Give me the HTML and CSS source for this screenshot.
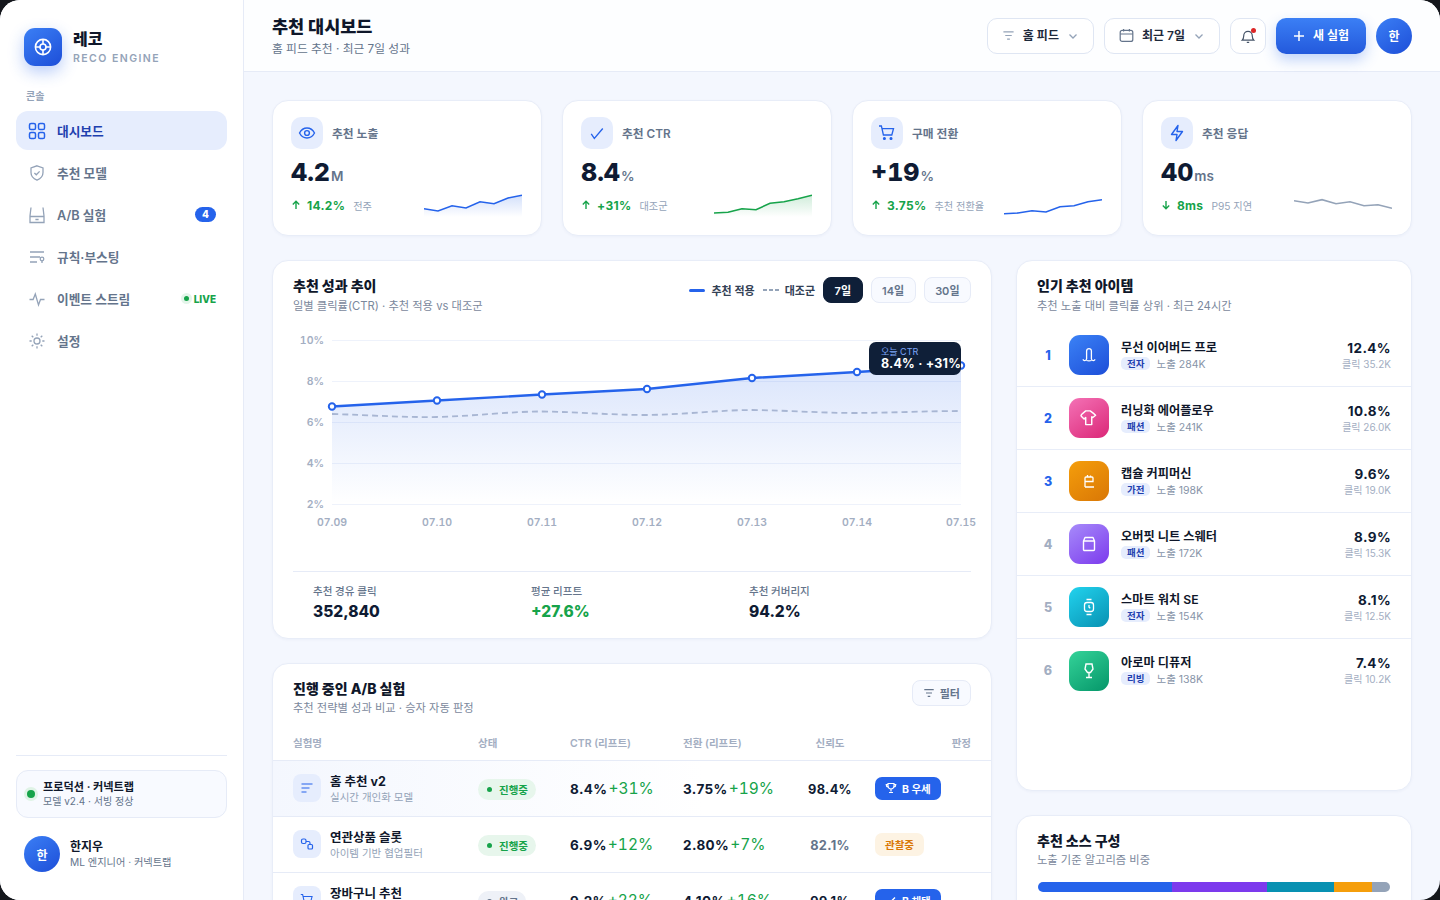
FILE: index.html
```html
<!DOCTYPE html>
<html lang="ko">
<head>
    <meta charset="UTF-8">
    <meta name="viewport" content="width=device-width, initial-scale=1.0">
    <title>레코 추천 대시보드</title>
    <link rel="stylesheet" href="styles.css">
</head>
<body>
<div class="app">

    <!-- Sidebar -->
    <aside class="sidebar">
        <div class="brand">
            <div class="brand-logo">
                <svg width="20" height="20" viewBox="0 0 20 20" fill="none" stroke="#fff" stroke-width="1.6"><circle cx="10" cy="10" r="7.6"/><circle cx="10" cy="10" r="3"/><path d="M10 2.4v4.6M10 13v4.6M2.4 10H7M13 10h4.6"/></svg>
            </div>
            <div>
                <div class="brand-name">레코</div>
                <div class="brand-sub">RECO ENGINE</div>
            </div>
        </div>
        <div class="nav-label">콘솔</div>
        <nav class="nav">
            <a class="nav-item active">
                <svg class="nav-ico" viewBox="0 0 18 18" fill="none" stroke="currentColor" stroke-width="1.5"><rect x="1.5" y="1.5" width="6" height="6" rx="1.6"/><rect x="10.5" y="1.5" width="6" height="6" rx="1.6"/><rect x="1.5" y="10.5" width="6" height="6" rx="1.6"/><rect x="10.5" y="10.5" width="6" height="6" rx="1.6"/></svg>
                <span>대시보드</span>
            </a>
            <a class="nav-item">
                <svg class="nav-ico" viewBox="0 0 18 18" fill="none" stroke="currentColor" stroke-width="1.3"><path d="M9 1.8l6 2.2v4.6c0 3.6-2.4 6.2-6 7.6-3.6-1.4-6-4-6-7.6V4z"/><path d="M6.4 9l1.9 1.8 3.3-3.4"/></svg>
                <span>추천 모델</span>
            </a>
            <a class="nav-item">
                <svg class="nav-ico" viewBox="0 0 18 18" fill="none" stroke="currentColor" stroke-width="1.3"><path d="M3 1.5L2 10v6.5h14V10L15 1.5M2 10.5h14M7.4 13.5h3.2"/></svg>
                <span>A/B 실험</span>
                <span class="nav-count">4</span>
            </a>
            <a class="nav-item">
                <svg class="nav-ico" viewBox="0 0 18 18" fill="none" stroke="currentColor" stroke-width="1.3"><path d="M2 4h14M2 9h10M2 14h7"/><circle cx="14" cy="11" r="1.8"/><path d="M14 12.8V15"/></svg>
                <span>규칙·부스팅</span>
            </a>
            <a class="nav-item">
                <svg class="nav-ico" viewBox="0 0 18 18" fill="none" stroke="currentColor" stroke-width="1.3"><path d="M1.5 9.5h3.6l2.2-5.5 3.2 11 2-5.5h4"/></svg>
                <span>이벤트 스트림</span>
                <span class="nav-live"><i class="live-dot"></i>LIVE</span>
            </a>
            <a class="nav-item">
                <svg class="nav-ico" viewBox="0 0 18 18" fill="none" stroke="currentColor" stroke-width="1.3"><circle cx="9" cy="9" r="3"/><path d="M9 1.5v2.2M9 14.3v2.2M1.5 9h2.2M14.3 9h2.2M3.7 3.7l1.6 1.6M12.7 12.7l1.6 1.6M3.7 14.3l1.6-1.6M12.7 5.3l1.6-1.6"/></svg>
                <span>설정</span>
            </a>
        </nav>
        <div class="side-bottom">
            <div class="env-card">
                <i class="env-dot"></i>
                <div>
                    <div class="env-title">프로덕션 · 커넥트랩</div>
                    <div class="env-sub">모델 v2.4 · 서빙 정상</div>
                </div>
            </div>
            <div class="user-row">
                <div class="avatar">한</div>
                <div>
                    <div class="user-name">한지우</div>
                    <div class="user-role">ML 엔지니어 · 커넥트랩</div>
                </div>
            </div>
        </div>
    </aside>

    <main class="main">
        <!-- Top bar -->
        <header class="topbar">
            <div class="top-titles">
                <h1>추천 대시보드</h1>
                <p>홈 피드 추천 · 최근 7일 성과</p>
            </div>
            <div class="top-actions">
                <button class="select">
                    <svg width="13" height="13" viewBox="0 0 14 14" fill="none" stroke="#94a3b8" stroke-width="1.3"><path d="M1.5 3h11M3.5 7h7M5.5 11h3"/></svg>
                    <span>홈 피드</span>
                    <svg class="chev" width="12" height="12" viewBox="0 0 12 12" fill="none" stroke="#94a3b8" stroke-width="1.3"><path d="M2.5 4.5L6 8l3.5-3.5"/></svg>
                </button>
                <button class="select">
                    <svg width="15" height="15" viewBox="0 0 15 15" fill="none" stroke="#64748b" stroke-width="1.2"><rect x="1.2" y="2.4" width="12.6" height="11" rx="2"/><path d="M1.2 6h12.6M4.6 1v2.6M10.4 1v2.6"/></svg>
                    <span>최근 7일</span>
                    <svg class="chev" width="12" height="12" viewBox="0 0 12 12" fill="none" stroke="#94a3b8" stroke-width="1.3"><path d="M2.5 4.5L6 8l3.5-3.5"/></svg>
                </button>
                <button class="bell">
                    <svg width="16" height="16" viewBox="0 0 16 16" fill="none" stroke="#475569" stroke-width="1.2"><path d="M2.2 12.2c1-1 1.5-2 1.5-4.2 0-2.8 1.8-4.6 4.3-4.6s4.3 1.8 4.3 4.6c0 2.2.5 3.2 1.5 4.2zM6.8 14.4h2.4"/></svg>
                    <i class="bell-dot"></i>
                </button>
                <button class="primary">
                    <svg width="12" height="12" viewBox="0 0 12 12" fill="none" stroke="#fff" stroke-width="1.5"><path d="M6 1v10M1 6h10"/></svg>
                    <span>새 실험</span>
                </button>
                <div class="avatar">한</div>
            </div>
        </header>

        <div class="content">
            <!-- KPI cards -->
            <section class="kpis">
                <div class="card kpi">
                    <div class="kpi-head">
                        <span class="kpi-ico"><svg width="18" height="18" viewBox="0 0 18 18" fill="none" stroke="#2563eb" stroke-width="1.4"><path d="M1.5 9C3.2 5.8 5.8 4 9 4s5.8 1.8 7.5 5C14.8 12.2 12.2 14 9 14S3.2 12.2 1.5 9z"/><circle cx="9" cy="9" r="2.4"/></svg></span>
                        <span class="kpi-label">추천 노출</span>
                    </div>
                    <div class="kpi-value">4.2<small>M</small></div>
                    <div class="kpi-foot">
                        <div class="delta">
                            <svg width="10" height="10" viewBox="0 0 10 10" fill="none" stroke="#16a34a" stroke-width="1.4"><path d="M5 9V1.5M1.8 4.5L5 1.3l3.2 3.2"/></svg>
                            <b>14.2%</b><span>전주</span>
                        </div>
                        <svg class="spark" viewBox="0 0 98 24" fill="none">
                            <defs><linearGradient id="sparkBlue" x1="0" y1="0" x2="0" y2="1"><stop offset="0" stop-color="#2563eb" stop-opacity=".2"/><stop offset="1" stop-color="#2563eb" stop-opacity="0"/></linearGradient></defs>
                            <path d="M0 14.7L14 17 28 11.7 42 14 56 7.7 70 9.7 84 4 98 1.3V23H0z" fill="url(#sparkBlue)"/>
                            <path d="M0 14.7L14 17 28 11.7 42 14 56 7.7 70 9.7 84 4 98 1.3" stroke="#2563eb" stroke-width="1.6"/>
                        </svg>
                    </div>
                </div>
                <div class="card kpi">
                    <div class="kpi-head">
                        <span class="kpi-ico"><svg width="16" height="16" viewBox="0 0 18 18" fill="none" stroke="#2563eb" stroke-width="1.5"><path d="M2.5 10l3.5 5 9.5-11"/></svg></span>
                        <span class="kpi-label">추천 CTR</span>
                    </div>
                    <div class="kpi-value">8.4<small>%</small></div>
                    <div class="kpi-foot">
                        <div class="delta">
                            <svg width="10" height="10" viewBox="0 0 10 10" fill="none" stroke="#16a34a" stroke-width="1.4"><path d="M5 9V1.5M1.8 4.5L5 1.3l3.2 3.2"/></svg>
                            <b>+31%</b><span>대조군</span>
                        </div>
                        <svg class="spark" viewBox="0 0 98 24" fill="none">
                            <defs><linearGradient id="sparkGreen" x1="0" y1="0" x2="0" y2="1"><stop offset="0" stop-color="#16a34a" stop-opacity=".2"/><stop offset="1" stop-color="#16a34a" stop-opacity="0"/></linearGradient></defs>
                            <path d="M0 19L14 18.3 28 14.7 42 15.7 56 9.3 70 7.7 84 4.7 98 1.3V23H0z" fill="url(#sparkGreen)"/>
                            <path d="M0 19L14 18.3 28 14.7 42 15.7 56 9.3 70 7.7 84 4.7 98 1.3" stroke="#16a34a" stroke-width="1.6"/>
                        </svg>
                    </div>
                </div>
                <div class="card kpi">
                    <div class="kpi-head">
                        <span class="kpi-ico"><svg width="18" height="18" viewBox="0 0 18 18" fill="none" stroke="#2563eb" stroke-width="1.3"><path d="M1 2h2.4l2 9h8.4l1.700-6.400H4"/><circle cx="6.400" cy="14.500" r=".9" fill="#2563eb"/><circle cx="13" cy="14.500" r=".9" fill="#2563eb"/></svg></span>
                        <span class="kpi-label">구매 전환</span>
                    </div>
                    <div class="kpi-value">+19<small>%</small></div>
                    <div class="kpi-foot">
                        <div class="delta">
                            <svg width="10" height="10" viewBox="0 0 10 10" fill="none" stroke="#16a34a" stroke-width="1.4"><path d="M5 9V1.5M1.8 4.5L5 1.3l3.2 3.2"/></svg>
                            <b>3.75%</b><span>추천 전환율</span>
                        </div>
                        <svg class="spark" viewBox="0 0 98 24" fill="none">
                            <path d="M0 19.7L14 19 28 16.7 42 18 56 12.7 70 11.7 84 7.7 98 5.7" stroke="#2563eb" stroke-width="1.6"/>
                        </svg>
                    </div>
                </div>
                <div class="card kpi">
                    <div class="kpi-head">
                        <span class="kpi-ico"><svg width="18" height="18" viewBox="0 0 18 18" fill="none" stroke="#2563eb" stroke-width="1.4" stroke-linejoin="round"><path d="M10 1.5L3.5 10.500H9L8 16.500l6.500-9H9z"/></svg></span>
                        <span class="kpi-label">추천 응답</span>
                    </div>
                    <div class="kpi-value">40<small>ms</small></div>
                    <div class="kpi-foot">
                        <div class="delta">
                            <svg width="10" height="10" viewBox="0 0 10 10" fill="none" stroke="#16a34a" stroke-width="1.4"><path d="M5 1v7.5M1.8 5.500L5 8.700l3.200-3.200"/></svg>
                            <b>8ms</b><span>P95 지연</span>
                        </div>
                        <svg class="spark" viewBox="0 0 98 24" fill="none">
                            <path d="M0 6.7L14 9 28 5.7 42 9.7 56 7.7 70 11.7 84 10.7 98 14.3" stroke="#94a3b8" stroke-width="1.6"/>
                        </svg>
                    </div>
                </div>
            </section>

            <div class="columns">
                <div class="col">
                    <!-- Trend chart -->
                    <section class="card chart-card">
                        <div class="card-head">
                            <div>
                                <h2>추천 성과 추이</h2>
                                <p>일별 클릭률(CTR) · 추천 적용 vs 대조군</p>
                            </div>
                            <div class="chart-tools">
                                <span class="legend"><i class="leg-solid"></i>추천 적용</span>
                                <span class="legend"><i class="leg-dash"></i>대조군</span>
                                <button class="range on">7일</button>
                                <button class="range">14일</button>
                                <button class="range">30일</button>
                            </div>
                        </div>
                        <div class="plot">
                            <svg class="plot-svg" width="678" height="210" viewBox="293 326 678 210" fill="none">
                                <defs><linearGradient id="areaFill" x1="0" y1="0" x2="0" y2="1"><stop offset="0" stop-color="#2563eb" stop-opacity=".17"/><stop offset="1" stop-color="#2563eb" stop-opacity="0"/></linearGradient></defs>
                                <g stroke="#eef2fb" stroke-width="1">
                                    <path d="M332 340.5H961M332 381.5H961M332 422.5H961M332 463.5H961M332 504.5H961"/>
                                </g>
                                <g class="axis" text-anchor="end">
                                    <text x="324" y="344">10%</text>
                                    <text x="324" y="385">8%</text>
                                    <text x="324" y="426">6%</text>
                                    <text x="324" y="467">4%</text>
                                    <text x="324" y="508">2%</text>
                                </g>
                                <g class="axis" text-anchor="middle">
                                    <text x="332" y="526">07.09</text>
                                    <text x="437" y="526">07.10</text>
                                    <text x="542" y="526">07.11</text>
                                    <text x="647" y="526">07.12</text>
                                    <text x="752" y="526">07.13</text>
                                    <text x="857" y="526">07.14</text>
                                    <text x="961" y="526">07.15</text>
                                </g>
                                <path d="M332 406.5L437 400.5 542 394.5 647 389 752 378 857 372 961 365.5V504H332z" fill="url(#areaFill)"/>
                                <path d="M332 414C370 415 400 417.5 437 417 475 416 510 411.5 542 411.5 580 412 610 415 647 415 685 414.5 720 410 752 410 790 410.5 820 413 857 413 890 412.8 930 411 961 411" stroke="#a8b6d3" stroke-width="1.8" stroke-dasharray="6 4"/>
                                <path d="M332 406.5L437 400.5 542 394.5 647 389 752 378 857 372 961 365.5" stroke="#2563eb" stroke-width="2.4"/>
                                <g fill="#fff" stroke="#2563eb" stroke-width="2">
                                    <circle cx="332" cy="406.5" r="3.2"/>
                                    <circle cx="437" cy="400.5" r="3.2"/>
                                    <circle cx="542" cy="394.5" r="3.2"/>
                                    <circle cx="647" cy="389" r="3.2"/>
                                    <circle cx="752" cy="378" r="3.2"/>
                                    <circle cx="857" cy="372" r="3.2"/>
                                    <circle cx="961" cy="365.5" r="3.2"/>
                                </g>
                            </svg>
                            <div class="tip">
                                <div class="tip-label">오늘 CTR</div>
                                <div class="tip-value">8.4% · +31%</div>
                            </div>
                        </div>
                        <div class="summary">
                            <div>
                                <div class="sum-label">추천 경유 클릭</div>
                                <div class="sum-value">352,840</div>
                            </div>
                            <div>
                                <div class="sum-label">평균 리프트</div>
                                <div class="sum-value up">+27.6%</div>
                            </div>
                            <div>
                                <div class="sum-label">추천 커버리지</div>
                                <div class="sum-value">94.2%</div>
                            </div>
                        </div>
                    </section>

                    <!-- A/B experiments -->
                    <section class="card ab-card">
                        <div class="card-head ab-head">
                            <div>
                                <h2>진행 중인 A/B 실험</h2>
                                <p>추천 전략별 성과 비교 · 승자 자동 판정</p>
                            </div>
                            <button class="filter">
                                <svg width="12" height="12" viewBox="0 0 14 14" fill="none" stroke="#64748b" stroke-width="1.3"><path d="M1.5 3h11M3.5 7h7M5.5 11h3"/></svg>
                                필터
                            </button>
                        </div>
                        <table class="ab-table">
                            <thead>
                                <tr>
                                    <th class="c-name">실험명</th>
                                    <th class="c-status">상태</th>
                                    <th class="c-ctr">CTR (리프트)</th>
                                    <th class="c-conv">전환 (리프트)</th>
                                    <th class="c-conf">신뢰도</th>
                                    <th class="c-verdict">판정</th>
                                </tr>
                            </thead>
                            <tbody>
                                <tr class="hl">
                                    <td class="c-name">
                                        <div class="exp">
                                            <span class="exp-ico"><svg width="14" height="14" viewBox="0 0 14 14" fill="none" stroke="#2563eb" stroke-width="1.1"><path d="M1.5 3h11M1.5 7h8M1.5 11h5"/></svg></span>
                                            <div class="exp-text"><div class="exp-name">홈 추천 v2</div><div class="exp-sub">실시간 개인화 모델</div></div>
                                        </div>
                                    </td>
                                    <td><span class="pill run"><i></i>진행중</span></td>
                                    <td><b class="num">8.4%</b><span class="lift">+31%</span></td>
                                    <td><b class="num">3.75%</b><span class="lift">+19%</span></td>
                                    <td class="c-conf"><b class="num conf">98.4%</b></td>
                                    <td class="c-verdict-cell">
                                        <span class="verdict win"><svg width="12" height="12" viewBox="0 0 12 12" fill="none" stroke="#fff" stroke-width="1.2"><path d="M3 1.5h6V4a3 3 0 0 1-6 0zM6 7v2.5M4 10.5h4M3 2.5H1.2c0 1.5.6 2.3 1.8 2.5M9 2.5h1.8c0 1.5-.6 2.3-1.8 2.5"/></svg>B 우세</span>
                                    </td>
                                </tr>
                                <tr>
                                    <td class="c-name">
                                        <div class="exp">
                                            <span class="exp-ico"><svg width="14" height="14" viewBox="0 0 14 14" fill="none" stroke="#2563eb" stroke-width="1.2"><rect x="1.5" y="2" width="4.5" height="4.5" rx="1.5"/><rect x="8" y="7.5" width="4.5" height="4.5" rx="1"/><path d="M6 4.5h2.500A1.500 1.500 0 0 1 10 6v1.500"/></svg></span>
                                            <div class="exp-text"><div class="exp-name">연관상품 슬롯</div><div class="exp-sub">아이템 기반 협업필터</div></div>
                                        </div>
                                    </td>
                                    <td><span class="pill run"><i></i>진행중</span></td>
                                    <td><b class="num">6.9%</b><span class="lift">+12%</span></td>
                                    <td><b class="num">2.80%</b><span class="lift">+7%</span></td>
                                    <td class="c-conf"><b class="num conf muted">82.1%</b></td>
                                    <td class="c-verdict-cell"><span class="verdict watch">관찰중</span></td>
                                </tr>
                                <tr>
                                    <td class="c-name">
                                        <div class="exp">
                                            <span class="exp-ico"><svg width="14" height="14" viewBox="0 0 18 18" fill="none" stroke="#2563eb" stroke-width="1.4"><path d="M1 2h2.4l2 9h8.4l1.700-6.400H4"/></svg></span>
                                            <div class="exp-text"><div class="exp-name">장바구니 추천</div><div class="exp-sub">세션 기반 추천</div></div>
                                        </div>
                                    </td>
                                    <td><span class="pill done"><i></i>완료</span></td>
                                    <td><b class="num">9.2%</b><span class="lift">+22%</span></td>
                                    <td><b class="num">4.10%</b><span class="lift">+16%</span></td>
                                    <td class="c-conf"><b class="num conf">99.1%</b></td>
                                    <td class="c-verdict-cell">
                                        <span class="verdict win"><svg width="12" height="12" viewBox="0 0 12 12" fill="none" stroke="#fff" stroke-width="1.4"><path d="M2 6.5L4.5 9 10 3.500"/></svg>B 채택</span>
                                    </td>
                                </tr>
                            </tbody>
                        </table>
                    </section>
                </div>

                <div class="col">
                    <!-- Popular items -->
                    <section class="card items-card">
                        <div class="card-head items-head">
                            <div>
                                <h2>인기 추천 아이템</h2>
                                <p>추천 노출 대비 클릭률 상위 · 최근 24시간</p>
                            </div>
                        </div>
                        <ul class="items">
                            <li class="item">
                                <span class="rank top">1</span>
                                <span class="thumb t-blue"><svg width="20" height="20" viewBox="0 0 20 20" fill="none" stroke="#fff" stroke-width="1.3"><path d="M7.600 14V6a2.400 2.400 0 0 1 4.800 0v8M7.600 14c-.3 2-3.400 2.200-3.400.2M12.400 14c.3 2 3.400 2.200 3.400.2M7.600 15.500c1.600.6 3.200.6 4.800 0"/></svg></span>
                                <div class="item-main">
                                    <div class="item-name">무선 이어버드 프로</div>
                                    <div class="item-meta"><span class="tag">전자</span><span>노출 284K</span></div>
                                </div>
                                <div class="item-right"><div class="rate">12.4%</div><div class="clicks">클릭 35.2K</div></div>
                            </li>
                            <li class="item">
                                <span class="rank top">2</span>
                                <span class="thumb t-pink"><svg width="22" height="22" viewBox="0 0 20 20" fill="none" stroke="#fff" stroke-width="1.3" stroke-linejoin="round"><path d="M7 3.500h4c1 .8 2.500 1.800 5 4l-2.500 2-1-.6V16H7V9.500L5.500 11 3 8.500c-.5-.6-.2-1.300.2-1.700z"/></svg></span>
                                <div class="item-main">
                                    <div class="item-name">러닝화 에어플로우</div>
                                    <div class="item-meta"><span class="tag">패션</span><span>노출 241K</span></div>
                                </div>
                                <div class="item-right"><div class="rate">10.8%</div><div class="clicks">클릭 26.0K</div></div>
                            </li>
                            <li class="item">
                                <span class="rank top">3</span>
                                <span class="thumb t-amber"><svg width="20" height="20" viewBox="0 0 20 20" fill="none" stroke="#fff" stroke-width="1.3"><path d="M6 16V7a1 1 0 0 1 1-1h6a1 1 0 0 1 1 1v3.500H6M6 16h9M8.500 6V4M11.500 6V4.500"/></svg></span>
                                <div class="item-main">
                                    <div class="item-name">캡슐 커피머신</div>
                                    <div class="item-meta"><span class="tag">가전</span><span>노출 198K</span></div>
                                </div>
                                <div class="item-right"><div class="rate">9.6%</div><div class="clicks">클릭 19.0K</div></div>
                            </li>
                            <li class="item">
                                <span class="rank">4</span>
                                <span class="thumb t-violet"><svg width="20" height="20" viewBox="0 0 20 20" fill="none" stroke="#fff" stroke-width="1.4" stroke-linejoin="round"><path d="M6 3.500h8l1.500 3.500v8.500a1 1 0 0 1-1 1h-9a1 1 0 0 1-1-1V7zM4.500 7h11"/></svg></span>
                                <div class="item-main">
                                    <div class="item-name">오버핏 니트 스웨터</div>
                                    <div class="item-meta"><span class="tag">패션</span><span>노출 172K</span></div>
                                </div>
                                <div class="item-right"><div class="rate">8.9%</div><div class="clicks">클릭 15.3K</div></div>
                            </li>
                            <li class="item">
                                <span class="rank">5</span>
                                <span class="thumb t-cyan"><svg width="20" height="20" viewBox="0 0 20 20" fill="none" stroke="#fff" stroke-width="1.3"><rect x="5.500" y="5.500" width="9" height="9" rx="2.500"/><path d="M7.500 2.500h5M7.500 17.500h5M10 8v2.200l1.300 1"/></svg></span>
                                <div class="item-main">
                                    <div class="item-name">스마트 워치 SE</div>
                                    <div class="item-meta"><span class="tag">전자</span><span>노출 154K</span></div>
                                </div>
                                <div class="item-right"><div class="rate">8.1%</div><div class="clicks">클릭 12.5K</div></div>
                            </li>
                            <li class="item">
                                <span class="rank">6</span>
                                <span class="thumb t-green"><svg width="20" height="20" viewBox="0 0 20 20" fill="none" stroke="#fff" stroke-width="1.4" stroke-linejoin="miter"><path d="M7 3h6l1 5-2.500 3.500h-3L6 8zM10 11.500v5M7 16.500h6"/></svg></span>
                                <div class="item-main">
                                    <div class="item-name">아로마 디퓨저</div>
                                    <div class="item-meta"><span class="tag">리빙</span><span>노출 138K</span></div>
                                </div>
                                <div class="item-right"><div class="rate">7.4%</div><div class="clicks">클릭 10.2K</div></div>
                            </li>
                        </ul>
                    </section>

                    <!-- Source mix -->
                    <section class="card source-card">
                        <h2>추천 소스 구성</h2>
                        <p>노출 기준 알고리즘 비중</p>
                        <div class="stack">
                            <span class="seg-a" style="width:38%"></span>
                            <span class="seg-b" style="width:27%"></span>
                            <span class="seg-c" style="width:19%"></span>
                            <span class="seg-d" style="width:11%"></span>
                            <span class="seg-e" style="width:5%"></span>
                        </div>
                    </section>
                </div>
            </div>
        </div>
    </main>
</div>
</body>
</html>
```

FILE: styles.css
```css
* {
    box-sizing: border-box;
}

body {
    margin: 0;
    width: 1440px;
    height: 900px;
    overflow: hidden;
    background-color: #15171c;
    font-family: "Inter", "Noto Sans CJK KR", sans-serif;
    color: #0f1b33;
}

h1, h2, p, ul {
    margin: 0;
    padding: 0;
}

button {
    font-family: inherit;
    cursor: pointer;
}

.app {
    display: flex;
    width: 1440px;
    height: 900px;
    border-radius: 20px;
    overflow: hidden;
    background-color: #f4f7fe;
}

/* Sidebar */
.sidebar {
    display: flex;
    flex-direction: column;
    flex: 0 0 244px;
    padding: 28px 16px 28px;
    background-color: #fff;
    border-right: 1px solid #e6ebf7;
}

.brand {
    display: flex;
    align-items: center;
    gap: 11px;
    padding-left: 8px;
}

.brand-logo {
    display: flex;
    align-items: center;
    justify-content: center;
    width: 38px;
    height: 38px;
    border-radius: 11px;
    background: linear-gradient(145deg, #3b7ff5, #1d4ed8);
    box-shadow: 0 6px 16px rgba(37, 99, 235, 0.32);
}

.brand-name {
    font-size: 16px;
    font-weight: 800;
    line-height: 20px;
    color: #0f172a;
}

.brand-sub {
    margin-top: 3px;
    font-size: 10.5px;
    font-weight: 600;
    letter-spacing: 1.45px;
    line-height: 14px;
    color: #94a3b8;
}

.nav-label {
    margin-top: 23px;
    padding-left: 10px;
    font-size: 10px;
    font-weight: 700;
    line-height: 14px;
    color: #94a3b8;
}

.nav {
    display: flex;
    flex-direction: column;
    gap: 3px;
    margin-top: 8px;
}

.nav-item {
    display: flex;
    align-items: center;
    gap: 11px;
    height: 39px;
    padding: 0 11px 0 12px;
    border-radius: 12px;
    font-size: 12.7px;
    font-weight: 600;
    color: #64748b;
}

.nav-item.active {
    background-color: #e6edfd;
    color: #1e40af;
}

.nav-item.active .nav-ico {
    color: #2563eb;
}

.nav-ico {
    flex: none;
    width: 18px;
    height: 18px;
    color: #94a3b8;
}

.nav-count {
    margin-left: auto;
    min-width: 21px;
    height: 15px;
    border-radius: 8px;
    background-color: #2563eb;
    font-size: 10px;
    font-weight: 800;
    line-height: 15px;
    text-align: center;
    color: #fff;
}

.nav-live {
    display: flex;
    align-items: center;
    gap: 5px;
    margin-left: auto;
    font-size: 10px;
    font-weight: 800;
    color: #16a34a;
}

.live-dot {
    width: 5px;
    height: 5px;
    border-radius: 50%;
    background-color: #16a34a;
    box-shadow: 0 0 0 3px #e4f5ea;
}

.side-bottom {
    margin-top: auto;
    padding-top: 14px;
    border-top: 1px solid #e6ebf7;
}

.env-card {
    display: flex;
    align-items: center;
    gap: 8px;
    height: 48px;
    padding: 0 10px;
    border: 1px solid #e6ebf7;
    border-radius: 12px;
    background-color: #f8faff;
}

.env-dot {
    flex: none;
    width: 8px;
    height: 8px;
    border-radius: 50%;
    background-color: #16a34a;
    box-shadow: 0 0 0 3px #dff3e6;
}

.env-title {
    font-size: 11.15px;
    font-weight: 700;
    line-height: 15px;
    color: #0f172a;
}

.env-sub {
    font-size: 10px;
    line-height: 13px;
    color: #64748b;
}

.user-row {
    display: flex;
    align-items: center;
    gap: 10px;
    margin-top: 18px;
    padding-left: 8px;
}

.avatar {
    display: flex;
    flex: none;
    align-items: center;
    justify-content: center;
    width: 36px;
    height: 36px;
    border-radius: 50%;
    background: linear-gradient(145deg, #3b7ff5, #1d4ed8);
    font-size: 12px;
    font-weight: 700;
    color: #fff;
}

.user-name {
    font-size: 12px;
    font-weight: 700;
    line-height: 16px;
    color: #0f172a;
}

.user-role {
    font-size: 10.2px;
    line-height: 15px;
    color: #64748b;
}

/* Top bar */
.main {
    display: flex;
    flex: 1;
    flex-direction: column;
    min-width: 0;
}

.topbar {
    display: flex;
    flex: 0 0 72px;
    align-items: center;
    justify-content: space-between;
    padding: 0 28px;
    background-color: #fdfeff;
    border-bottom: 1px solid #e6ebf7;
}

.top-titles h1 {
    font-size: 17.5px;
    font-weight: 800;
    line-height: 24px;
    color: #0f172a;
}

.top-titles p {
    margin-top: 2px;
    font-size: 11.75px;
    line-height: 16px;
    color: #64748b;
}

.top-actions {
    display: flex;
    align-items: center;
    gap: 10px;
}

.select {
    display: flex;
    align-items: center;
    gap: 8px;
    height: 36px;
    padding: 0 14px;
    border: 1px solid #dfe6f3;
    border-radius: 10px;
    background-color: #fff;
    font-size: 12px;
    font-weight: 600;
    color: #1e293b;
}

.select span,
.primary span {
    margin-top: -2px;
}

.bell {
    position: relative;
    display: flex;
    align-items: center;
    justify-content: center;
    width: 36px;
    height: 36px;
    padding: 0;
    border: 1px solid #dfe6f3;
    border-radius: 10px;
    background-color: #fff;
}

.bell-dot {
    position: absolute;
    top: 9px;
    right: 9px;
    width: 5px;
    height: 5px;
    border-radius: 50%;
    background-color: #dc2626;
}

.primary {
    display: flex;
    align-items: center;
    justify-content: center;
    gap: 8px;
    width: 90px;
    height: 36px;
    border: none;
    border-radius: 10px;
    background: linear-gradient(180deg, #3b7ff5, #2359dc);
    box-shadow: 0 6px 14px rgba(37, 99, 235, 0.28);
    font-size: 12px;
    font-weight: 700;
    color: #fff;
}

/* Content */
.content {
    flex: 1;
    min-height: 0;
    padding: 28px 28px 0;
    overflow: hidden;
}

.card {
    border: 1px solid #e8edf8;
    border-radius: 16px;
    background-color: #fff;
    box-shadow: 0 1px 3px rgba(30, 58, 138, 0.04);
}

.card h2 {
    font-size: 14px;
    font-weight: 800;
    line-height: 18px;
    color: #0f172a;
}

.card p {
    margin-top: 3px;
    font-size: 11.25px;
    line-height: 16px;
    color: #7b889c;
}

.kpis {
    display: grid;
    grid-template-columns: repeat(4, 1fr);
    gap: 20px;
    margin-bottom: 24px;
}

.kpi {
    height: 136px;
    padding: 16px 19px 16px 18px;
}

.kpi-head {
    display: flex;
    align-items: center;
    gap: 9px;
}

.kpi-ico {
    display: flex;
    align-items: center;
    justify-content: center;
    width: 32px;
    height: 32px;
    border-radius: 10px;
    background-color: #e6edfd;
}

.kpi-label {
    margin-top: -2px;
    font-size: 11.75px;
    font-weight: 600;
    color: #64748b;
}

.kpi-value {
    height: 32px;
    margin-top: 7px;
    font-size: 25px;
    font-weight: 800;
    font-variant-numeric: tabular-nums;
    line-height: 32px;
    color: #0f1b33;
}

.kpi-value small {
    margin-left: 1px;
    font-size: 13.5px;
    font-weight: 600;
    color: #64748b;
}

.kpi-foot {
    display: flex;
    align-items: center;
    justify-content: space-between;
    margin-top: 6px;
}

.delta {
    display: flex;
    align-items: center;
    gap: 6px;
    margin-bottom: 2px;
    font-size: 12px;
}

.delta b {
    font-weight: 700;
    letter-spacing: 0.3px;
    color: #16a34a;
}

.delta span {
    margin-left: 2px;
    font-size: 10.2px;
    color: #94a3b8;
}

.spark {
    flex: none;
    width: 98px;
    height: 24px;
}

.columns {
    display: grid;
    grid-template-columns: 720px 396px;
    gap: 24px;
    align-items: start;
}

.col {
    display: flex;
    flex-direction: column;
    gap: 24px;
}

.card-head {
    display: flex;
    align-items: flex-start;
    justify-content: space-between;
}

/* Trend chart */
.chart-card {
    height: 379px;
    padding: 16px 20px 0;
}

.chart-tools {
    display: flex;
    align-items: center;
    gap: 8px;
}

.legend {
    display: flex;
    align-items: center;
    gap: 6px;
    font-size: 11px;
    font-weight: 600;
    color: #334155;
}

.leg-solid {
    width: 16px;
    height: 3px;
    border-radius: 2px;
    background-color: #2563eb;
}

.leg-dash {
    width: 16px;
    height: 2px;
    background: repeating-linear-gradient(90deg, #94a3b8 0 4px, transparent 4px 6px);
}

.range {
    height: 26px;
    padding: 0 10.5px;
    border: 1px solid #e6ebf7;
    border-radius: 8px;
    background-color: #f8faff;
    font-size: 11px;
    font-weight: 600;
    color: #64748b;
}

.range.on {
    border-color: #0f1f38;
    background-color: #0f1f38;
    color: #fff;
}

.plot {
    position: relative;
    height: 210px;
    margin-top: 12px;
}

.plot-svg {
    display: block;
    overflow: visible;
}

.axis text {
    font-family: "Inter", sans-serif;
    font-size: 10.5px;
    font-weight: 600;
    font-variant-numeric: tabular-nums;
    fill: #a3aec2;
}

.tip {
    position: absolute;
    left: 576px;
    top: 16px;
    width: 92px;
    height: 33px;
    padding: 5px 0 0 12px;
    border-radius: 7px;
    background-color: #0f1f38;
    white-space: nowrap;
}

.tip-label {
    font-size: 9px;
    line-height: 10px;
    color: #7ea6f8;
}

.tip-value {
    font-size: 12.5px;
    font-weight: 700;
    line-height: 13px;
    letter-spacing: 0.2px;
    color: #fff;
}

.summary {
    display: grid;
    grid-template-columns: repeat(3, 1fr);
    gap: 16px;
    margin-top: 35px;
    padding: 13px 20px 0;
    border-top: 1px solid #e6ebf7;
}

.sum-label {
    font-size: 10.5px;
    font-weight: 500;
    line-height: 14px;
    color: #64748b;
}

.sum-value {
    margin-top: 2px;
    font-size: 15.5px;
    font-weight: 800;
    line-height: 22px;
    color: #0f1b33;
}

.sum-value.up {
    color: #16a34a;
}

/* A/B table */
.ab-card {
    overflow: hidden;
}

.ab-head {
    padding: 16px 20px 0;
}

.ab-head p {
    margin-top: 2px;
}

.filter {
    display: flex;
    align-items: center;
    gap: 5px;
    height: 26px;
    padding: 0 10px;
    border: 1px solid #e6ebf7;
    border-radius: 8px;
    background-color: #f8faff;
    font-size: 11px;
    font-weight: 600;
    color: #64748b;
}

.ab-table {
    width: 100%;
    margin-top: 17px;
    border-collapse: collapse;
    table-layout: fixed;
}

.ab-table th {
    height: 27px;
    padding: 0 0 7px;
    border-bottom: 1px solid #e6ebf7;
    font-size: 10.5px;
    font-weight: 600;
    text-align: left;
    color: #a3aec2;
}

.ab-table td {
    height: 56px;
    padding: 0;
    border-bottom: 1px solid #e6ebf7;
    white-space: nowrap;
}

.ab-table .c-name {
    width: 205px;
    padding-left: 20px;
}

.c-status {
    width: 92px;
}

.c-ctr {
    width: 113px;
}

.c-conv {
    width: 106px;
}

.ab-table .c-conf {
    width: 82px;
    text-align: center;
}

.ab-table .c-verdict {
    padding-right: 20px;
    text-align: right;
}

.ab-table .c-verdict-cell {
    padding-left: 4px;
}

.ab-table .hl {
    background: linear-gradient(90deg, #f4f7fe, #fff 60%);
}

.exp {
    display: flex;
    align-items: center;
    gap: 9px;
}

.exp-ico {
    display: flex;
    flex: none;
    align-items: center;
    justify-content: center;
    width: 28px;
    height: 28px;
    border-radius: 8px;
    background-color: #e6edfd;
}

.exp-text {
    padding-top: 2px;
}

.exp-name {
    font-size: 12.5px;
    font-weight: 700;
    line-height: 16px;
    color: #0f172a;
}

.exp-sub {
    font-size: 10.5px;
    line-height: 15px;
    color: #94a3b8;
}

.pill {
    display: inline-flex;
    align-items: center;
    gap: 7px;
    height: 21px;
    padding: 0 8px 0 9px;
    border-radius: 11px;
    font-size: 10.5px;
    font-weight: 600;
}

.pill i {
    width: 5px;
    height: 5px;
    border-radius: 50%;
    background-color: currentColor;
}

.pill.run {
    background-color: #e7f6ec;
    color: #16a34a;
}

.pill.done {
    background-color: #eef1f7;
    color: #64748b;
}

.num {
    font-size: 13.5px;
    font-weight: 700;
    letter-spacing: 0.4px;
    color: #0f1b33;
}

.num.conf {
    font-size: 12.8px;
    letter-spacing: 0.3px;
}

.num.muted {
    color: #64748b;
}

.lift {
    margin-left: 1px;
    font-size: 15.5px;
    font-weight: 400;
    font-variant-numeric: tabular-nums;
    color: #16a34a;
}

.verdict {
    display: inline-flex;
    align-items: center;
    gap: 5px;
    height: 23px;
    padding: 0 10px;
    border-radius: 7px;
    font-size: 10.5px;
    font-weight: 700;
}

.verdict.win {
    width: 66px;
    background-color: #2563eb;
    color: #fff;
}

.verdict.watch {
    background-color: #fdf3e3;
    color: #d97706;
}

/* Popular items */
.items-card {
    height: 531px;
}

.items-head {
    padding: 16px 20px 0;
}

.items {
    margin-top: 10px;
    list-style: none;
}

.item {
    display: flex;
    align-items: center;
    height: 63px;
    padding: 0 20px;
    border-bottom: 1px solid #e8edf8;
}

.item:last-child {
    border-bottom: none;
}

.rank {
    width: 22px;
    margin-right: 10px;
    font-size: 12.5px;
    font-weight: 800;
    text-align: center;
    color: #a3aec2;
}

.rank.top {
    color: #2563eb;
}

.thumb {
    display: flex;
    flex: none;
    align-items: center;
    justify-content: center;
    width: 40px;
    height: 40px;
    border-radius: 11px;
}

.t-blue {
    background: linear-gradient(145deg, #3b82f6, #1d4ed8);
}

.t-pink {
    background: linear-gradient(145deg, #f472b6, #db2777);
}

.t-amber {
    background: linear-gradient(145deg, #f59e0b, #d97706);
}

.t-violet {
    background: linear-gradient(145deg, #a78bfa, #7c3aed);
}

.t-cyan {
    background: linear-gradient(145deg, #22d3ee, #0891b2);
}

.t-green {
    background: linear-gradient(145deg, #34d399, #059669);
}

.item-main {
    flex: 1;
    min-width: 0;
    margin-left: 12px;
}

.item-name {
    font-size: 12.2px;
    font-weight: 600;
    line-height: 16px;
    color: #0f172a;
}

.item-meta {
    display: flex;
    align-items: center;
    gap: 6px;
    font-size: 10.5px;
    color: #8794a8;
}

.tag {
    height: 13px;
    padding: 0 6px;
    border-radius: 5px;
    background-color: #e6edfd;
    font-size: 9.5px;
    font-weight: 700;
    line-height: 13px;
    color: #1e40af;
}

.item-right {
    text-align: right;
}

.rate {
    font-size: 13.5px;
    font-weight: 700;
    letter-spacing: 0.4px;
    line-height: 17px;
    color: #0f1b33;
}

.clicks {
    font-size: 10px;
    line-height: 14px;
    color: #a3aec2;
}

/* Source mix */
.source-card {
    height: 120px;
    padding: 16px 20px 0;
}

.source-card p {
    margin-top: 2px;
}

.stack {
    display: flex;
    height: 10px;
    margin: 14px 1px 0;
    border-radius: 5px;
    overflow: hidden;
}

.seg-a {
    background-color: #2563eb;
}

.seg-b {
    background-color: #7c3aed;
}

.seg-c {
    background-color: #0891b2;
}

.seg-d {
    background-color: #f59e0b;
}

.seg-e {
    background-color: #94a3b8;
}
```
